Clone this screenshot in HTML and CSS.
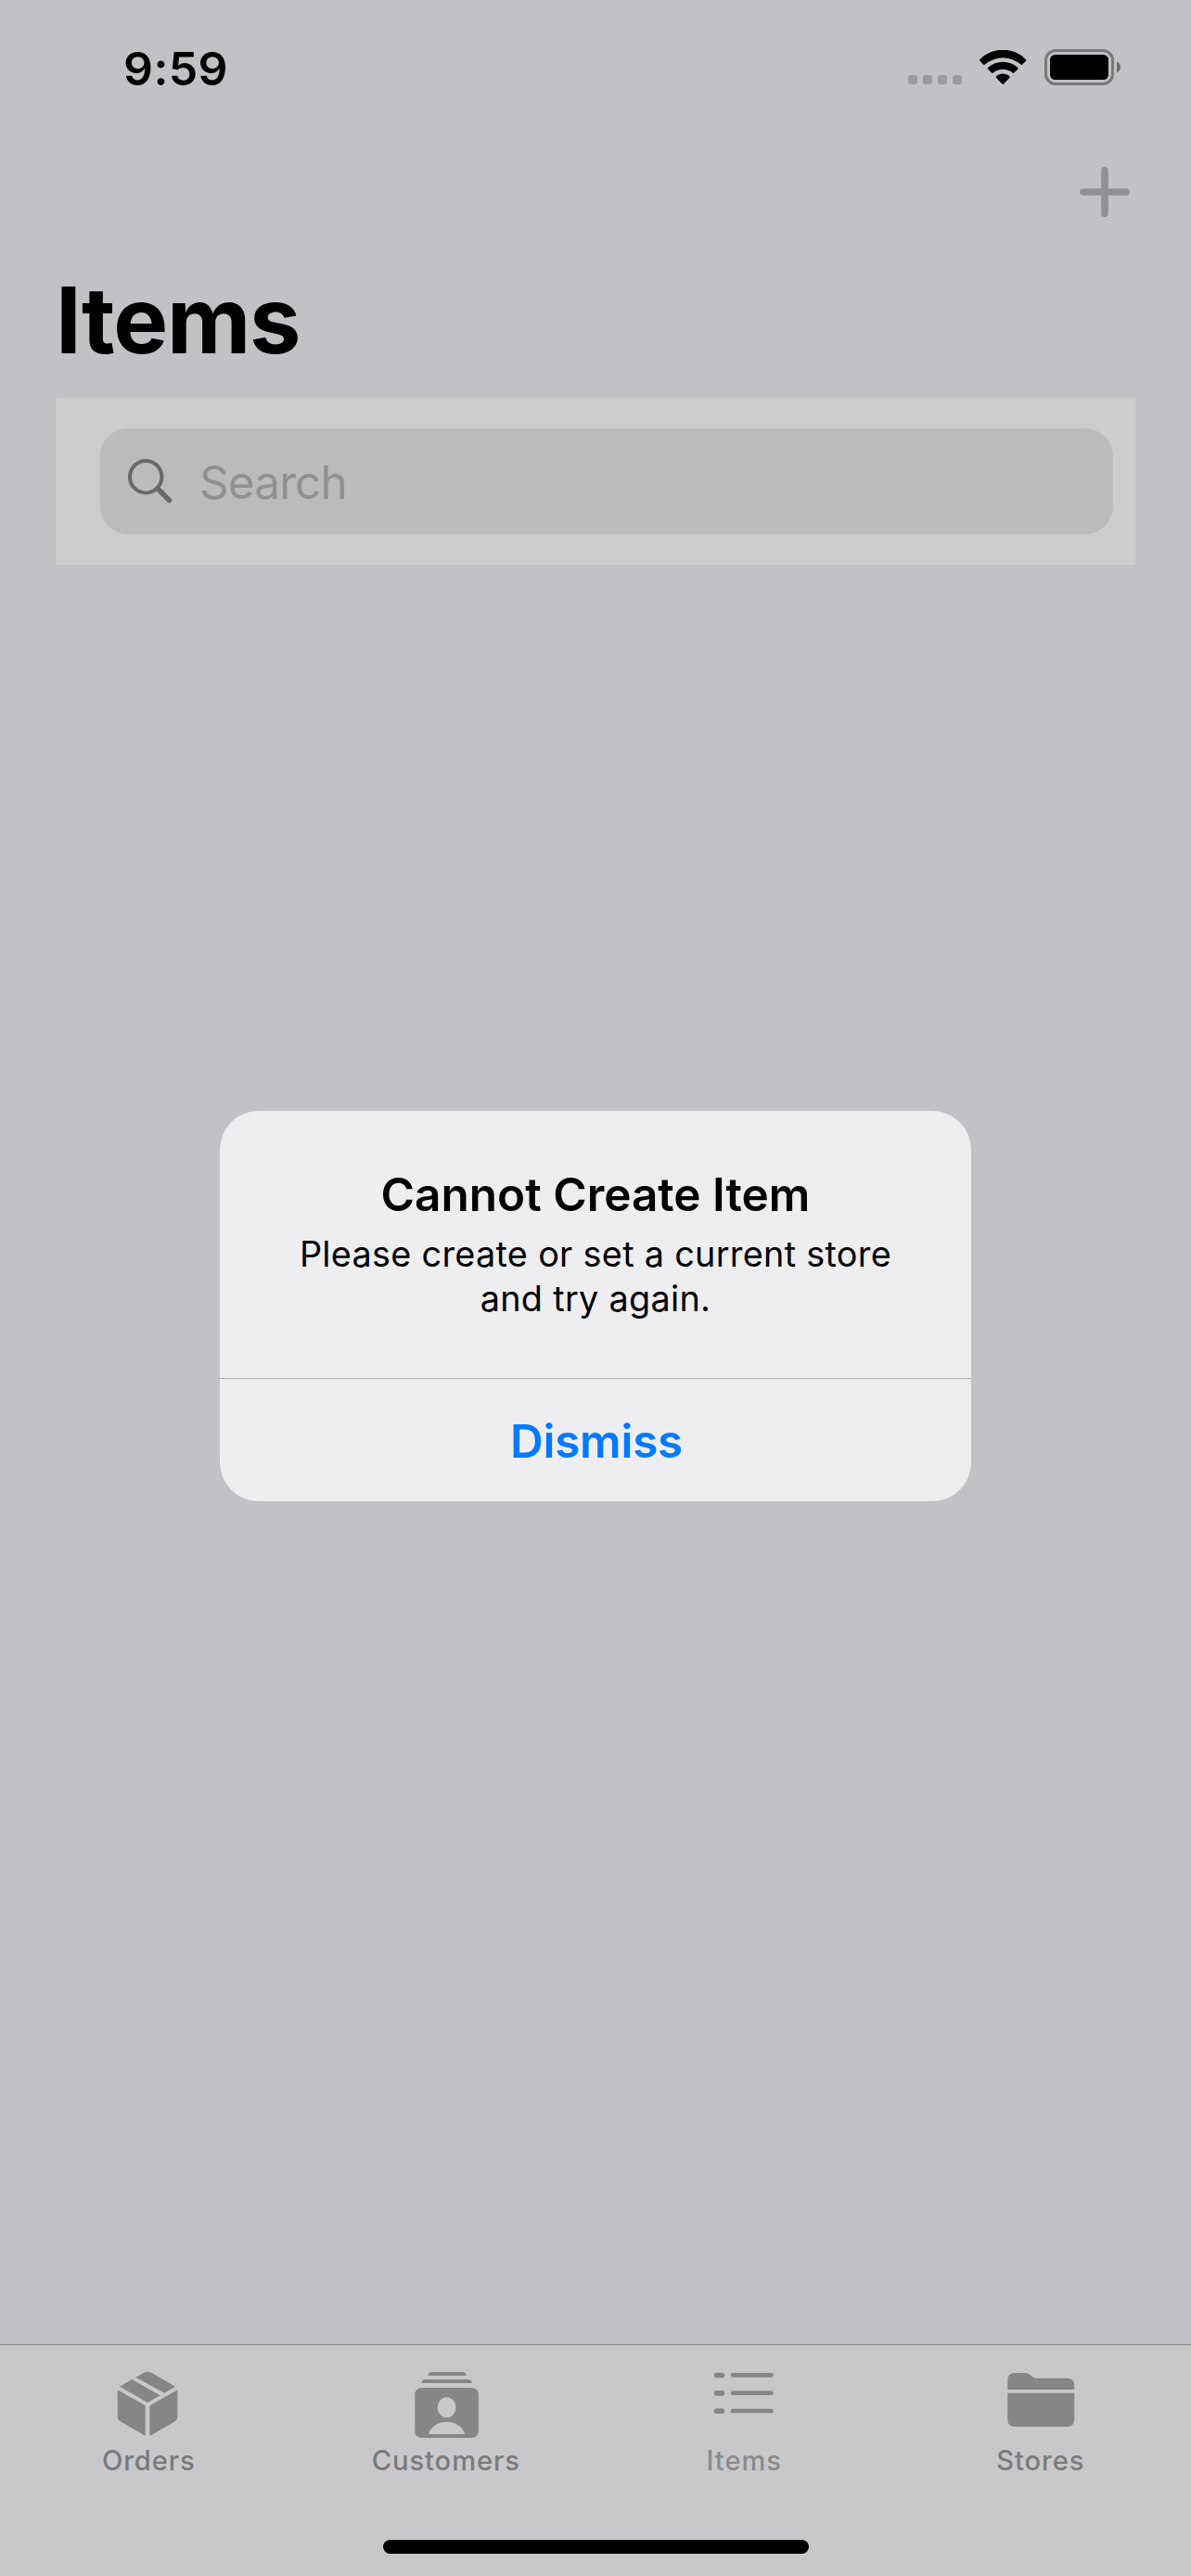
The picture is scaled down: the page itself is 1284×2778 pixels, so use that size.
FILE: index.html
```
<!DOCTYPE html>
<html lang="en">
<head>
<meta charset="utf-8">
<title>Items</title>
<link rel="stylesheet" href="styles.css">
</head>
<body>
<div class="screen">
  <header class="status">
    <span class="time">9:59</span>
    <div class="indicators">
      <svg class="cell" width="58" height="37" viewBox="0 0 58 37"><rect y="27" width="10" height="10" rx="3"/><rect x="16" y="27" width="10" height="10" rx="3"/><rect x="32" y="27" width="10" height="10" rx="3"/><rect x="48" y="27" width="10" height="10" rx="3"/></svg>
      <svg class="wifi" width="51" height="38" viewBox="0 0 51 38"><path d="M.6 10A34.5 34.5 0 0 1 49.8 10Q50.8 11 49.8 12L45.9 15.7Q45.2 16.3 44.4 15.6A29 29 0 0 0 6 15.6Q5.2 16.3 4.5 15.7L.6 12Q-.4 11 .6 10Z"/><path d="M9.2 18.8A24 24 0 0 1 41.2 18.8Q42.2 19.8 41.2 20.8L37.2 24.5Q36.5 25.1 35.7 24.5A17 17 0 0 0 14.7 24.5Q13.9 25.1 13.2 24.5L9.2 20.8Q8.2 19.8 9.2 18.8Z"/><path d="M18.1 28.2C22 24.6 28.4 24.6 32.3 28.2Q33.2 29.1 32.3 30L26 36.6Q25.2 37.4 24.4 36.6L18.1 30Q17.2 29.1 18.1 28.2Z"/></svg>
      <svg class="battery" width="82" height="39" viewBox="0 0 82 39"><rect class="shell" x="1.5" y="1.5" width="72" height="36" rx="10.5"/><rect x="6" y="6" width="63" height="27" rx="5.5"/><path class="nub" d="M78 13.5C83.2 15.5 83.2 23.500 78 25.500Z"/></svg>
    </div>
  </header>
  <nav class="navbar">
    <svg class="plus" width="54" height="54" viewBox="0 0 54 54"><path d="M27 3.800V50.200M3.800 27H50.200"/></svg>
  </nav>
  <main class="content">
    <h1 class="title">Items</h1>
    <div class="panel">
      <div class="search">
        <svg class="glass" width="48" height="48" viewBox="0 0 48 48"><circle cx="19.200" cy="19.200" r="17.200"/><path d="M31.700 31.700L44.500 44.500"/></svg>
        <span class="placeholder">Search</span>
      </div>
    </div>
  </main>
  <footer class="tabbar">
    <div class="tabs">
      <div class="tab">
        <svg class="icon" viewBox="180.75 129 240 240"><path d="M260 161L285 147Q298 140 312 147L388 191L353 212ZM208 191L247 168L339 220L298 243ZM201 202L291 253V351L210 304Q201 299 201 289ZM395 202L305 253V351L387 304Q395 299 395 289Z"/></svg>
        <span class="label">Orders</span>
      </div>
      <div class="tab">
        <svg class="icon" viewBox="182.250 129 240 240"><path d="M243 156Q244 144 255 144H355Q366 144 367 156ZM222 180Q224 168 235 168H373Q384 168 386 180Z"/><path fill-rule="evenodd" d="M225 195H383Q407 195 407 219V333Q407 357 383 357H225Q201 357 201 333V219Q201 195 225 195ZM304 226A30 33 0 0 0 304 292A30 33 0 0 0 304 226ZM245 345H363C356 322 333 305 304 305S252 322 245 345Z"/></svg>
        <span class="label">Customers</span>
      </div>
      <div class="tab active">
        <svg class="icon" viewBox="123.750 129 240 240"><rect x="150" y="146" width="34" height="17" rx="8"/><rect x="150" y="204" width="34" height="17" rx="8"/><rect x="150" y="262" width="34" height="17" rx="8"/><rect x="204" y="147" width="138" height="14" rx="7"/><rect x="204" y="205" width="138" height="14" rx="7"/><rect x="204" y="263" width="138" height="14" rx="7"/></svg>
        <span class="label">Items</span>
      </div>
      <div class="tab">
        <svg class="icon" viewBox="125.250 129 240 240"><path d="M138 201V171Q138 147 162 147H196Q204 147 210 152L219 160Q224 164 230 164H330Q354 164 354 188V201ZM138 212H354V297Q354 321 330 321H162Q138 321 138 297Z"/></svg>
        <span class="label">Stores</span>
      </div>
    </div>
    <div class="home"></div>
  </footer>
  <div class="overlay">
    <div class="alert" role="alertdialog">
      <div class="body">
        <h2 class="heading">Cannot Create Item</h2>
        <p class="message">Please create or set a current store<br>and try again.</p>
      </div>
      <button class="dismiss">Dismiss</button>
    </div>
  </div>
</div>
</body>
</html>
```
FILE: styles.css
```
* { box-sizing: border-box; margin: 0; }
body { background: #c2c1c6; color: #000; font-family: Inter, "Liberation Sans", sans-serif; }
svg { display: block; flex: none; }
.screen { position: relative; width: 1284px; height: 2778px; display: flex; flex-direction: column; overflow: hidden; }

.status { height: 145px; padding: 0 76px 0 133px; display: flex; justify-content: space-between; align-items: center; }
.time { padding-top: 2px; font-size: 50px; font-weight: 600; line-height: 146px; letter-spacing: .4px; }
.indicators { display: flex; align-items: center; }
.cell { fill: #9b9b9e; }
.wifi { margin: 0 19px; }
.battery .shell { fill: none; stroke: #79797b; stroke-width: 3; }
.battery .nub { fill: #6b6b6d; }

.navbar { height: 124px; padding-right: 66px; display: flex; justify-content: flex-end; align-items: center; }
.plus { fill: none; stroke: #919193; stroke-width: 7.6; stroke-linecap: round; }

.content { flex: 1; padding: 16px 60px 0; }
.title { font-size: 99px; font-weight: 700; line-height: 120px; letter-spacing: -1.2px; margin-bottom: 24px; }
.panel { height: 180px; padding: 33px 24px 33px 48px; background: #ccc; }
.search { height: 114px; border-radius: 30px; background: #bbb; padding: 0 30px; display: flex; align-items: center; gap: 29px; }
.glass { fill: none; stroke: #69696b; stroke-width: 4; }
.glass path { stroke-width: 5.5; stroke-linecap: round; }
.placeholder { padding-top: 2px; color: #919191; font-size: 49.5px; line-height: 60px; letter-spacing: -.9px; }

.tabbar { height: 250px; border-top: 1px solid #87878a; background: #c8c8ca; display: flex; flex-direction: column; }
.tabs { display: grid; grid-template-columns: repeat(4, 1fr); padding: 24px 2px 0 0; }
.tab { display: flex; flex-direction: column; align-items: center; gap: 3px; color: #7a7a7c; }
.active { color: #8a8a8b; }
.icon { width: 80px; height: 80px; fill: #868688; }
.label { font-size: 29.2px; font-weight: 500; line-height: 36px; letter-spacing: .9px; }
.active .label { padding-left: 2px; }
.home { width: 459px; height: 15px; border-radius: 8px; background: #000; margin: auto auto 24px; }

.overlay { position: absolute; inset: 0; padding-top: 39px; display: flex; align-items: center; justify-content: center; }
.alert { width: 810px; height: 421px; border-radius: 42px; overflow: hidden; background: #eeeef0; display: flex; flex-direction: column; text-align: center; }
.body { height: 288px; padding-top: 57px; }
.heading { font-size: 49.5px; font-weight: 600; line-height: 66px; margin-bottom: 7px; }
.message { font-size: 37.8px; line-height: 48px; letter-spacing: .3px; }
.dismiss { flex: 1; border: 0; border-top: 1px solid #b0b0b3; background: none; padding: 2px 0 0 2px; color: #007aff; font: 600 49.5px Inter, "Liberation Sans", sans-serif; letter-spacing: -.25px; }
```
